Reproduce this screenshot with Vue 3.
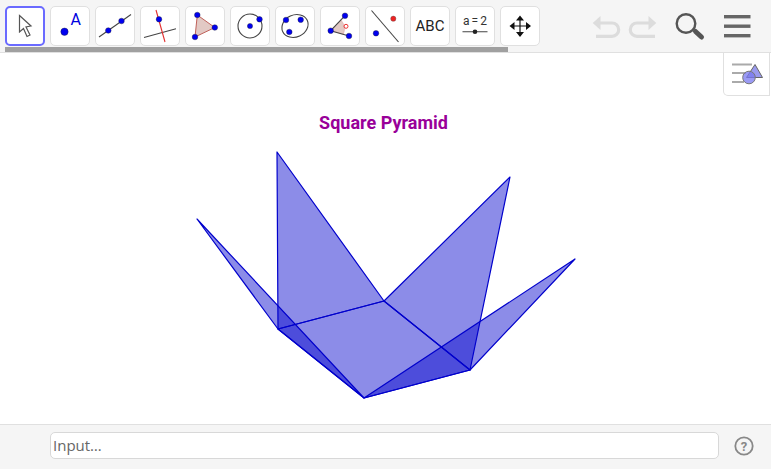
<script setup>
const base = [[278, 329], [384, 301], [470, 370], [364, 398]]
const apexes = [[277, 152], [510, 177], [575, 259], [197, 219]]
const pts = (list) => list.map((p) => p.join(',')).join(' ')
const faces = base.map((p, i) => pts([p, base[(i + 1) % 4], apexes[i]]))
const basePts = pts(base)
</script>

<template>
  <div class="app">
    <header class="toolbar">
      <div class="tools">
        <button class="tool active">
          <svg viewBox="5 6 40 40"><path class="cursor" d="M19.5 15.5 31 26l-5 1 4 8-3 1.5-3.5-8-4 3.5z" /></svg>
        </button>
        <button class="tool">
          <svg viewBox="50 6 40 40">
            <circle class="pt" cx="64.5" cy="31.7" r="3.7" />
            <text class="label-a" x="75.7" y="25.3">A</text>
          </svg>
        </button>
        <button class="tool">
          <svg viewBox="95 6 40 40">
            <line class="ln" x1="99" y1="37" x2="131" y2="14.5" />
            <circle class="pt" cx="108.3" cy="30.5" r="2.8" />
            <circle class="pt" cx="121.5" cy="21" r="2.8" />
          </svg>
        </button>
        <button class="tool">
          <svg viewBox="140 6 40 40">
            <line class="ln" x1="144" y1="37.5" x2="176" y2="28.7" />
            <line class="red" x1="156" y1="10" x2="165" y2="42" />
            <circle class="pt" cx="159" cy="19.3" r="2.8" />
          </svg>
        </button>
        <button class="tool">
          <svg viewBox="185 6 40 40">
            <polygon class="tri" points="197.3,15 214.8,27.5 195,37" />
            <circle class="pt" cx="197.3" cy="15" r="2.8" />
            <circle class="pt" cx="214.8" cy="27.5" r="2.8" />
            <circle class="pt" cx="195" cy="37" r="2.8" />
          </svg>
        </button>
        <button class="tool">
          <svg viewBox="230 6 40 40">
            <circle class="ring" cx="250" cy="26" r="12" />
            <circle class="pt" cx="250" cy="26" r="2.6" />
            <circle class="pt" cx="259.5" cy="19.3" r="2.8" />
          </svg>
        </button>
        <button class="tool">
          <svg viewBox="275 6 40 40">
            <ellipse class="ring" cx="295" cy="26" rx="13.5" ry="11" transform="rotate(-25 295 26)" />
            <circle class="pt" cx="286" cy="20" r="2.8" />
            <circle class="pt" cx="300.7" cy="19.7" r="2.8" />
            <circle class="pt" cx="289.3" cy="32" r="2.8" />
          </svg>
        </button>
        <button class="tool">
          <svg viewBox="320 6 40 40">
            <path class="wedge" d="M330.7 30.7 341 20a14 14 0 0 1 2.4 14.2z" />
            <line class="ln" x1="330.7" y1="30.7" x2="345" y2="15.7" />
            <line class="ln" x1="330.7" y1="30.7" x2="349" y2="36" />
            <circle class="pt" cx="345" cy="15.7" r="2.8" />
            <circle class="pt" cx="349" cy="36" r="2.8" />
            <circle class="pt" cx="330.7" cy="30.7" r="2.8" />
            <circle class="alpha" cx="346" cy="26.3" r="2" />
          </svg>
        </button>
        <button class="tool">
          <svg viewBox="365 6 40 40">
            <line class="ln" x1="371.5" y1="10.5" x2="398.5" y2="42" />
            <circle class="pt-red" cx="393.3" cy="18.7" r="2.6" />
            <circle class="pt" cx="376" cy="33.3" r="2.8" />
          </svg>
        </button>
        <button class="tool tool-abc">ABC</button>
        <button class="tool">
          <svg viewBox="455 6 40 40">
            <text class="label-slider" x="475" y="25">a = 2</text>
            <line class="ln" x1="462.5" y1="31.7" x2="487.5" y2="31.7" />
            <circle class="pt-dark" cx="475" cy="31.7" r="2.3" />
          </svg>
        </button>
        <button class="tool">
          <svg viewBox="500 6 40 40">
            <path class="move-line" d="M520 18v16M512 26h16" />
            <path class="move-head" d="m520 15.5 4 5h-8zM520 37l4-5h-8zM509.5 26l5-4v8zM531 26l-5-4v8z" />
          </svg>
        </button>
      </div>
      <div class="actions">
        <svg class="undo" viewBox="590 6 34 40">
          <path class="history" d="M597 23h15a6.7 6.7 0 0 1 0 13.4h-16" />
          <path class="history-head" d="m592.7 23 7.8-7v14z" />
        </svg>
        <svg class="redo" viewBox="625 6 34 40">
          <path class="history" d="M651 23h-14a6.7 6.7 0 0 0 0 13.4h18" />
          <path class="history-head" d="m656.3 23-7.8-7v14z" />
        </svg>
        <svg class="search" viewBox="672 6 36 40">
          <circle class="lens" cx="686" cy="23.5" r="9.3" />
          <line class="handle" x1="695.5" y1="31.5" x2="701.5" y2="37" />
        </svg>
        <svg class="menu" viewBox="720 6 36 40">
          <rect class="bar" x="724" y="15" width="26.5" height="3.4" />
          <rect class="bar" x="724" y="24.5" width="26.5" height="3.4" />
          <rect class="bar" x="724" y="34" width="26.5" height="3.4" />
        </svg>
      </div>
      <div class="scrollbar"></div>
    </header>

    <main class="canvas">
      <svg class="drawing" viewBox="0 53 771 371">
        <text class="title" x="383.5" y="128.5">Square Pyramid</text>
        <polygon class="face" :points="basePts" />
        <polygon v-for="(f, i) in faces" :key="i" class="face" :points="f" />
      </svg>
      <button class="style-toggle">
        <svg viewBox="724 53 45 42">
          <rect class="sb" x="732" y="63.5" width="20" height="2" />
          <rect class="sb" x="732" y="72" width="14" height="2" />
          <rect class="sb" x="732" y="81" width="12" height="2" />
          <polygon class="sb-tri" points="755,64.5 762.5,77.5 746.5,77.5" />
          <circle class="sb-circle" cx="749" cy="77.5" r="6.3" />
        </svg>
      </button>
    </main>

    <footer class="inputbar">
      <div class="input">Input…</div>
      <svg class="help" viewBox="0 0 20 20">
        <circle class="help-ring" cx="10" cy="10" r="8.7" />
        <text class="help-mark" x="10" y="14.5">?</text>
      </svg>
    </footer>
  </div>
</template>

<style scoped>
.app {
  width: 771px;
  height: 469px;
  display: flex;
  flex-direction: column;
  background: #fff;
  overflow: hidden;
  font-family: Roboto, "Liberation Sans", sans-serif;
}

.toolbar {
  position: relative;
  height: 53px;
  box-sizing: border-box;
  flex: none;
  display: flex;
  align-items: flex-start;
  padding: 6px 0 0 5px;
  background: #f5f5f5;
  border-bottom: 1px solid #e0e0e0;
}

.tools {
  display: flex;
  gap: 5px;
}

.tool {
  width: 40px;
  height: 40px;
  box-sizing: border-box;
  padding: 0;
  position: relative;
  background: #fff;
  border: 1px solid #e0e0e0;
  border-radius: 5px;
  overflow: hidden;
}

.tool svg {
  position: absolute;
  left: -1px;
  top: -1px;
  width: 40px;
  height: 40px;
}

.tool.active {
  border: 2px solid #6a6aff;
}

.tool.active svg {
  left: -2px;
  top: -2px;
}

.tool-abc {
  font: 400 15px Roboto, sans-serif;
  color: #222;
}

.cursor {
  fill: #fff;
  stroke: #555;
  stroke-width: 1.2;
}

.pt {
  fill: #0000f0;
  stroke: #223;
  stroke-width: 0.4;
}

.pt-red {
  fill: #e22;
  stroke: #555;
  stroke-width: 0.4;
}

.pt-dark {
  fill: #222;
}

.ln {
  stroke: #444;
  stroke-width: 1.1;
}

.red {
  stroke: #e23030;
  stroke-width: 1.1;
}

.ring {
  fill: none;
  stroke: #444;
  stroke-width: 1.1;
}

.tri {
  fill: #e2c9c4;
  stroke: #c0615a;
  stroke-width: 1;
}

.wedge {
  fill: #e2c9c4;
  stroke: #d99;
  stroke-width: 0.5;
}

.alpha {
  fill: none;
  stroke: #e33;
  stroke-width: 1;
}

.label-a {
  fill: #0000e0;
  font: 400 16px Roboto, sans-serif;
  text-anchor: middle;
}

.label-slider {
  fill: #333;
  font: 400 12px Roboto, sans-serif;
  word-spacing: -1px;
  text-anchor: middle;
}

.move-line {
  stroke: #111;
  stroke-width: 1.2;
  fill: none;
}

.move-head {
  fill: #111;
}

.actions {
  display: flex;
  margin-left: 50px;
}

.actions svg {
  height: 40px;
  flex: none;
}

.undo,
.redo {
  width: 34px;
}

.undo {
  margin-right: 1px;
}

.redo {
  margin-right: 13px;
}

.search {
  width: 36px;
  margin-right: 12px;
}

.menu {
  width: 36px;
}

.history {
  fill: none;
  stroke: #dcdcdc;
  stroke-width: 3.2;
}

.history-head {
  fill: #dcdcdc;
}

.lens {
  fill: none;
  stroke: #555;
  stroke-width: 2.4;
}

.handle {
  stroke: #555;
  stroke-width: 5;
  stroke-linecap: round;
}

.bar {
  fill: #666;
}

.scrollbar {
  position: absolute;
  left: 5px;
  top: 47px;
  width: 503px;
  height: 5px;
  background: #a0a0a0;
}

.canvas {
  position: relative;
  flex: 1;
  min-height: 0;
}

.drawing {
  display: block;
  width: 771px;
  height: 371px;
}

.title {
  fill: #990099;
  font: 700 18px Roboto, sans-serif;
  text-anchor: middle;
}

.face {
  fill: rgba(0, 0, 204, 0.45);
  stroke: #0000cc;
  stroke-width: 1.2;
  stroke-linejoin: round;
}

.style-toggle {
  position: absolute;
  top: 0;
  right: 1px;
  width: 47px;
  height: 43px;
  box-sizing: border-box;
  padding: 0;
  background: #fff;
  border: 1px solid #e0e0e0;
  border-top: 0;
  border-radius: 0 0 0 5px;
  overflow: hidden;
}

.style-toggle svg {
  display: block;
  width: 45px;
  height: 42px;
}

.sb {
  fill: #aaa;
}

.sb-tri {
  fill: #9a9aee;
  stroke: #666;
  stroke-width: 1;
}

.sb-circle {
  fill: rgba(120, 120, 240, 0.75);
  stroke: #777;
  stroke-width: 1;
}

.inputbar {
  height: 45px;
  box-sizing: border-box;
  flex: none;
  display: flex;
  align-items: center;
  padding: 0 16px 3px 50px;
  background: #f5f5f5;
  border-top: 1px solid #e0e0e0;
}

.input {
  width: 669px;
  height: 27px;
  box-sizing: border-box;
  padding-left: 2px;
  background: #fff;
  border: 1px solid #d8d8d8;
  border-radius: 5px;
  color: #666;
  font: 400 15px/25px "Open Sans", sans-serif;
}

.help {
  width: 20px;
  height: 20px;
  margin-left: 15px;
  flex: none;
}

.help-ring {
  fill: none;
  stroke: #888;
  stroke-width: 1.8;
}

.help-mark {
  fill: #888;
  font: 700 13px Roboto, sans-serif;
  text-anchor: middle;
}
</style>
